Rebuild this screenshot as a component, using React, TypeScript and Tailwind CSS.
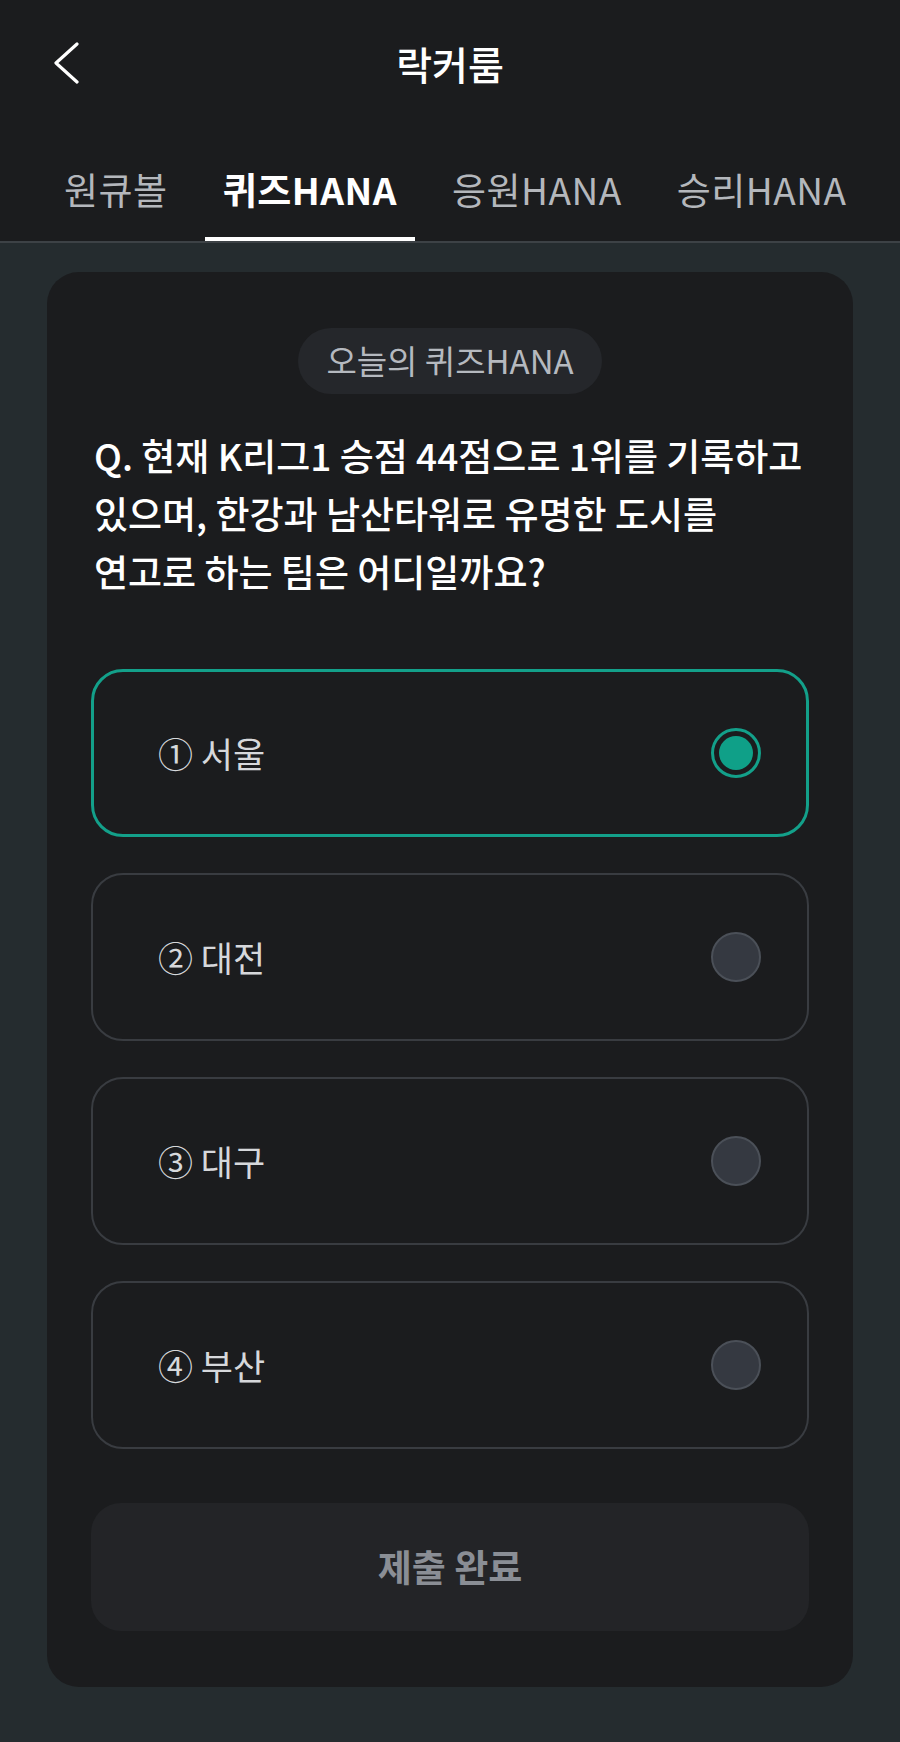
import { useState } from "react";

const tabs = ["원큐볼", "퀴즈HANA", "응원HANA", "승리HANA"];
const options = ["① 서울", "② 대전", "③ 대구", "④ 부산"];

export default function App() {
  const [selected, setSelected] = useState(0);

  return (
    <div className="min-h-screen bg-[#252c2f] font-['Noto_Sans_CJK_KR','Noto_Sans',sans-serif]">
      {/* Header */}
      <header className="border-b-2 border-[#3d4246] bg-[#1b1c1e]">
        <div className="grid h-[126px] grid-cols-[1fr_auto_1fr] items-center">
          <button className="ml-[50px] flex h-[44px] w-[32px] items-center justify-center">
            <svg width="30" height="42" viewBox="0 0 30 42" fill="none">
              <path
                d="M26 2 L5 21 L26 40"
                stroke="#ffffff"
                strokeWidth="3.2"
                strokeLinecap="round"
                strokeLinejoin="round"
              />
            </svg>
          </button>
          <h1 className="text-[39px] font-medium text-white">락커룸</h1>
          <div />
        </div>

        {/* Tabs */}
        <nav className="flex h-[115px] items-end gap-[19px] pl-[46px]">
          {tabs.map((tab, i) => (
            <div
              key={tab}
              className={
                i === 1
                  ? "border-b-4 border-white px-[18px] pb-[28px] text-[37px] leading-[40px] font-bold tracking-[0.5px] text-white"
                  : "border-b-4 border-transparent px-[18px] pb-[28px] text-[37px] leading-[40px] tracking-[0.5px] text-[#b4b7bc]"
              }
            >
              {tab}
            </div>
          ))}
        </nav>
      </header>

      {/* Quiz card */}
      <main className="px-[47px] pt-[29px] pb-[55px]">
        <section className="rounded-[32px] bg-[#1b1c1e] px-[44px] pt-[56px] pb-[56px]">
          <div className="mx-auto flex h-[66px] w-fit items-center rounded-full bg-[#25272b] px-[28px] text-[33px] text-[#b5b9bf]">
            오늘의 퀴즈HANA
          </div>

          <p className="mt-[32px] pl-[3px] text-[37px] leading-[58px] font-medium text-white">
            Q. 현재 K리그1 승점 44점으로 1위를 기록하고
            <br />
            있으며, 한강과 남산타워로 유명한 도시를
            <br />
            연고로 하는 팀은 어디일까요?
          </p>

          <ul className="mt-[69px] flex flex-col gap-[36px]">
            {options.map((opt, i) => {
              const active = selected === i;
              return (
                <li
                  key={opt}
                  onClick={() => setSelected(i)}
                  className={
                    active
                      ? "flex h-[168px] items-center justify-between rounded-[32px] border-[3px] border-[#13a08a] pr-[45px] pl-[64px]"
                      : "flex h-[168px] items-center justify-between rounded-[32px] border-2 border-[#393c41] pr-[46px] pl-[65px]"
                  }
                >
                  <span className="text-[35px] text-[#d6d8db]">{opt}</span>
                  {active ? (
                    <span className="flex h-[50px] w-[50px] items-center justify-center rounded-full border-[3px] border-[#13a08a]">
                      <span className="h-[34px] w-[34px] rounded-full bg-[#0fa088]" />
                    </span>
                  ) : (
                    <span className="h-[50px] w-[50px] rounded-full border-2 border-[#4b5058] bg-[#353941]" />
                  )}
                </li>
              );
            })}
          </ul>

          <button className="mt-[54px] flex h-[128px] w-full items-center justify-center rounded-[30px] bg-[#232427] text-[37px] font-bold text-[#8a8e95]">
            제출 완료
          </button>
        </section>
      </main>
    </div>
  );
}
